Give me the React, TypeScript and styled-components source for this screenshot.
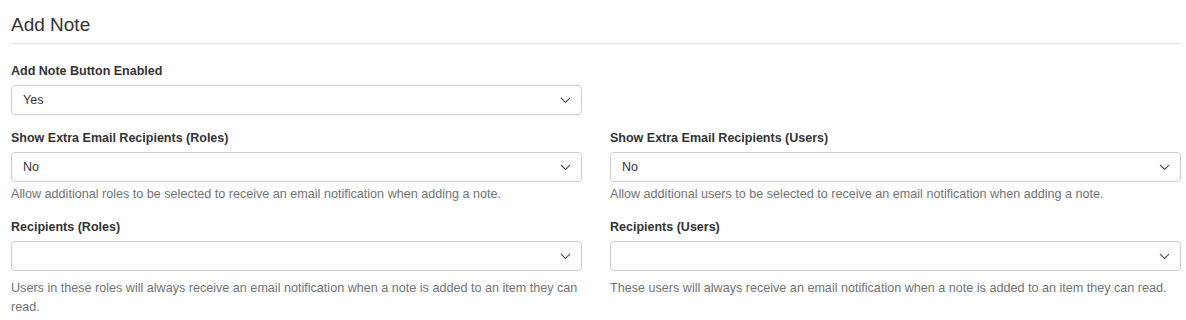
import styled, { createGlobalStyle } from "styled-components";

const GlobalStyle = createGlobalStyle`
  body {
    margin: 0;
    background: #fff;
    font-family: "Liberation Sans", Arial, Helvetica, sans-serif;
    color: #333;
  }
`;

const Chevron = () => (
  <svg width="11" height="7" viewBox="0 0 11 7" fill="none">
    <path d="M1 1L5.5 5.5L10 1" stroke="#555" strokeWidth="1.1" />
  </svg>
);

type FieldProps = {
  label: string;
  value?: string;
  help?: string;
  helpGap?: number;
};

const Field = ({ label, value, help, helpGap = 3 }: FieldProps) => (
  <Group>
    <Label>{label}</Label>
    <Select>
      <SelectValue>{value}</SelectValue>
      <Chevron />
    </Select>
    {help && <Help $gap={helpGap}>{help}</Help>}
  </Group>
);

const App = () => {
  return (
    <>
      <GlobalStyle />
      <Page>
        <Heading>Add Note</Heading>
        <Grid>
          <Field label="Add Note Button Enabled" value="Yes" />
          <div />
          <Field
            label="Show Extra Email Recipients (Roles)"
            value="No"
            help="Allow additional roles to be selected to receive an email notification when adding a note."
          />
          <Field
            label="Show Extra Email Recipients (Users)"
            value="No"
            help="Allow additional users to be selected to receive an email notification when adding a note."
          />
          <Field
            label="Recipients (Roles)"
            help="Users in these roles will always receive an email notification when a note is added to an item they can read."
            helpGap={8}
          />
          <Field
            label="Recipients (Users)"
            help="These users will always receive an email notification when a note is added to an item they can read."
            helpGap={8}
          />
        </Grid>
      </Page>
    </>
  );
};

const Page = styled.div`
  padding: 14px 5px 0 11px;
`;

const Heading = styled.h3`
  margin: 0;
  padding-bottom: 7px;
  font-size: 19px;
  font-weight: 400;
  line-height: 22px;
  color: #333;
  border-bottom: 1px solid #e3e3e3;
`;

const Grid = styled.div`
  display: grid;
  grid-template-columns: 571px 571px;
  column-gap: 28px;
  padding-top: 18px;
`;

const Group = styled.div`
  display: flex;
  flex-direction: column;
  margin-bottom: 14px;
`;

const Label = styled.div`
  font-size: 12.5px;
  font-weight: 700;
  line-height: 18px;
  color: #333;
  margin-bottom: 5px;
`;

const Select = styled.div`
  box-sizing: border-box;
  height: 30px;
  display: flex;
  align-items: center;
  justify-content: space-between;
  padding: 0 10px 0 11px;
  border: 1px solid #cfcfcf;
  border-radius: 4px;
  background: #fff;
`;

const SelectValue = styled.span`
  font-size: 12.5px;
  color: #333;
`;

const Help = styled.div<{ $gap: number }>`
  margin-top: ${(p) => p.$gap}px;
  font-size: 12.6px;
  line-height: 19px;
  color: #737373;
`;

export default App;
